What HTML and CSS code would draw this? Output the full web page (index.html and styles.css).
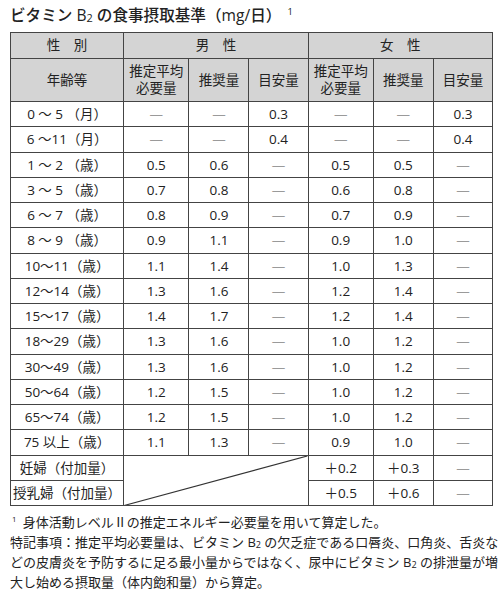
FILE: index.html
```html
<!DOCTYPE html>
<html lang="ja">
  <head>
    <meta charset="utf-8">
    <title>ビタミンB2の食事摂取基準</title>
    <link rel="stylesheet" href="styles.css">
  </head>
  <body>
    <h1 class="title">ビタミン B<sub>2</sub> の食事摂取基準（mg/日）<sup>1</sup></h1>
    <table class="intake">
      <colgroup>
        <col class="col-age">
        <col class="col-ear"><col class="col-rda"><col class="col-ai">
        <col class="col-ear"><col class="col-rda"><col class="col-ai">
      </colgroup>
      <thead>
        <tr class="row-sex">
          <th>性　別</th>
          <th colspan="3">男　性</th>
          <th colspan="3">女　性</th>
        </tr>
        <tr class="row-kind">
          <th>年齢等</th>
          <th>推定平均<br>必要量</th>
          <th>推奨量</th>
          <th>目安量</th>
          <th>推定平均<br>必要量</th>
          <th>推奨量</th>
          <th>目安量</th>
        </tr>
      </thead>
      <tbody>
        <tr><td>0 ～ 5 （月）</td><td class="none">—</td><td class="none">—</td><td>0.3</td><td class="none">—</td><td class="none">—</td><td>0.3</td></tr>
        <tr><td>6 ～11（月）</td><td class="none">—</td><td class="none">—</td><td>0.4</td><td class="none">—</td><td class="none">—</td><td>0.4</td></tr>
        <tr><td>1 ～ 2 （歳）</td><td>0.5</td><td>0.6</td><td class="none">—</td><td>0.5</td><td>0.5</td><td class="none">—</td></tr>
        <tr><td>3 ～ 5 （歳）</td><td>0.7</td><td>0.8</td><td class="none">—</td><td>0.6</td><td>0.8</td><td class="none">—</td></tr>
        <tr><td>6 ～ 7 （歳）</td><td>0.8</td><td>0.9</td><td class="none">—</td><td>0.7</td><td>0.9</td><td class="none">—</td></tr>
        <tr><td>8 ～ 9 （歳）</td><td>0.9</td><td>1.1</td><td class="none">—</td><td>0.9</td><td>1.0</td><td class="none">—</td></tr>
        <tr><td>10～11（歳）</td><td>1.1</td><td>1.4</td><td class="none">—</td><td>1.0</td><td>1.3</td><td class="none">—</td></tr>
        <tr><td>12～14（歳）</td><td>1.3</td><td>1.6</td><td class="none">—</td><td>1.2</td><td>1.4</td><td class="none">—</td></tr>
        <tr><td>15～17（歳）</td><td>1.4</td><td>1.7</td><td class="none">—</td><td>1.2</td><td>1.4</td><td class="none">—</td></tr>
        <tr><td>18～29（歳）</td><td>1.3</td><td>1.6</td><td class="none">—</td><td>1.0</td><td>1.2</td><td class="none">—</td></tr>
        <tr><td>30～49（歳）</td><td>1.3</td><td>1.6</td><td class="none">—</td><td>1.0</td><td>1.2</td><td class="none">—</td></tr>
        <tr><td>50～64（歳）</td><td>1.2</td><td>1.5</td><td class="none">—</td><td>1.0</td><td>1.2</td><td class="none">—</td></tr>
        <tr><td>65～74（歳）</td><td>1.2</td><td>1.5</td><td class="none">—</td><td>1.0</td><td>1.2</td><td class="none">—</td></tr>
        <tr><td>75 以上（歳）</td><td>1.1</td><td>1.3</td><td class="none">—</td><td>0.9</td><td>1.0</td><td class="none">—</td></tr>
        <tr>
          <td>妊婦（付加量）</td>
          <td colspan="3" rowspan="2" class="slash">
            <svg class="slash-line" viewBox="0 0 100 100" preserveAspectRatio="none"><line x1="0" y1="100" x2="100" y2="0" vector-effect="non-scaling-stroke"/></svg>
          </td>
          <td>＋0.2</td><td>＋0.3</td><td class="none">—</td>
        </tr>
        <tr><td>授乳婦（付加量）</td><td>＋0.5</td><td>＋0.6</td><td class="none">—</td></tr>
      </tbody>
    </table>
    <div class="notes">
      <p class="note-one"><sup>1</sup> 身体活動レベルⅡの推定エネルギー必要量を用いて算定した。</p>
      <p>
        <span class="line full">特記事項：推定平均必要量は、ビタミン B<sub>2</sub> の欠乏症である口唇炎、口角炎、舌炎な</span>
        <span class="line full">どの皮膚炎を予防するに足る最小量からではなく、尿中にビタミン B<sub>2</sub> の排泄量が増</span>
        <span class="line">大し始める摂取量（体内飽和量）から算定。</span>
      </p>
    </div>
  </body>
</html>
```
FILE: styles.css
```css
body{
  margin: 0;
  padding: 6px 10px 0 10px;
  font-family: "Open Sans", "Noto Sans CJK JP", sans-serif;
  color: #222;
  background: #fff;
}

.title{
  margin: 0 0 8px 0;
  font-size: 15.6px;
  font-weight: 500;
  line-height: 18px;
  white-space: nowrap;
}

.title sub, .notes sub{
  font-size: 70%;
  vertical-align: -0.12em;
  line-height: 0;
}

.title sup{
  font-size: 60%;
  vertical-align: 0.6em;
  line-height: 0;
  margin-left: 6px;
}

.intake{
  width: 483px;
  border-collapse: collapse;
  table-layout: fixed;
  font-size: 13.5px;
  border: 1.5px solid #444;
}

.col-age{ width: 113px; }
.col-ear{ width: 65px; }
.col-rda{ width: 60px; }
.col-ai{ width: 59px; }

.intake th, .intake td{
  border: 1px solid #444;
  padding: 0;
  text-align: center;
  white-space: nowrap;
}

.intake th{
  background: #d4d4d4;
  font-weight: 400;
  line-height: 17px;
}

.row-sex th{ height: 25px; }
.row-kind th{ height: 42px; }

.intake td{
  height: 24.25px;
  line-height: 16px;
}

.intake td.none{
  color: #9a9a9a;
}

.intake td.slash{
  position: relative;
}

.slash-line{
  position: absolute;
  left: 0;
  top: 0;
  width: 100%;
  height: 100%;
  display: block;
}

.slash-line line{
  stroke: #333;
  stroke-width: 1.2;
}

.notes{
  width: 483px;
  margin-top: 6px;
  font-size: 13px;
  line-height: 20px;
}

.notes p{
  margin: 0;
  white-space: nowrap;
}

.notes .line{
  display: block;
}

.notes .line.full{
  text-align: justify;
  text-align-last: justify;
}

.note-one sup{
  font-size: 60%;
  vertical-align: 0.6em;
  line-height: 0;
  margin: 0 3px 0 2px;
}
```
